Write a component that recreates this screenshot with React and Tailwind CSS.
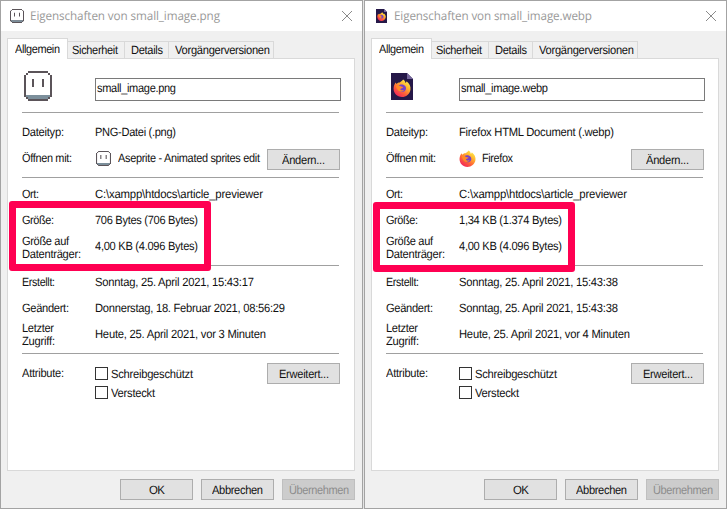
import { useLayoutEffect, useRef, useState } from "react";

function T({ w, children, className = "" }) {
  const ref = useRef(null);
  const [fit, setFit] = useState({ scale: 1, spacing: 0 });
  useLayoutEffect(() => {
    const el = ref.current;
    el.style.letterSpacing = "0px";
    el.style.transform = "none";
    const natural = el.getBoundingClientRect().width;
    const scale = Math.min(1, Math.pow(w / natural, 0.6));
    const spacing = (w / scale - natural) / (children.length - 1);
    el.style.letterSpacing = `${spacing}px`;
    el.style.transform = `scaleX(${scale})`;
    setFit({ scale, spacing });
  }, [w, children]);
  return (
    <span className={"block h-[14px] shrink-0 whitespace-nowrap leading-[14px] [text-rendering:geometricPrecision] " + className} style={{ width: w }}>
      <span ref={ref} className="inline-block origin-left" style={{ letterSpacing: fit.spacing, transform: `scaleX(${fit.scale})` }}>
        {children}
      </span>
    </span>
  );
}

function Sprite({ size, thin }) {
  return (
    <svg width={size} height={size} viewBox="0 0 28 30" preserveAspectRatio="none" shapeRendering={thin ? "auto" : "crispEdges"} className="block shrink-0">
      <path d="M4 0H24V2H26V4H28V26H26V28H24V30H4V28H2V26H0V4H2V2H4Z" fill="#5b5459" />
      <path d="M4 2H24V4H26V24H2V4H4Z" fill="#fff" />
      <path d="M2 24H26V26H24V28H4V26H2Z" fill="#7c8f9b" />
      <path d="M8 8h2v8h-2zM18 8h2v8h-2z" fill="#5b5459" />
    </svg>
  );
}

function Fox({ className }) {
  return (
    <svg viewBox="0 0 32 32" className={className}>
      <defs>
        <linearGradient id="flame" x1="0.85" y1="0.05" x2="0.2" y2="0.95">
          <stop offset="0" stopColor="#fff04a" />
          <stop offset="0.35" stopColor="#ffb02e" />
          <stop offset="0.65" stopColor="#ff6238" />
          <stop offset="1" stopColor="#f0245c" />
        </linearGradient>
      </defs>
      <path d="M18 1c3 2 4 4 4 6 2-1 2-2 2-3 5 4 8 9 7 15-1 8-8 13-15 13C7 32 1 25 1 17c0-5 2-9 4-11l1 3c1-1 2-2 4-3l2 0c2-1 5-3 6-5z" fill="url(#flame)" />
      <path d="M10 12c3-3 9-3 12 1 3 5 0 10-6 10-5 0-8-4-8-8l4 1 3-2c-2 0-3-2-5-2z" fill="#7542c9" />
      <path d="M5 12c3-2 6-1 8 1l5 1c0 2-4 2-5 4 1 3 5 2 7 1-2 4-8 5-11 1-2-2-3-5-4-8z" fill="#ff8a25" />
    </svg>
  );
}

function FoxFile({ className, fox }) {
  return (
    <span className={"relative block shrink-0 " + className}>
      <svg viewBox="0 0 22 27" preserveAspectRatio="none" className="block h-full w-full">
        <path d="M0 0H16L22 6V27H0Z" fill="#251848" />
        <path d="M16 0L22 6H16Z" fill="#75669b" />
      </svg>
      <Fox className={"absolute " + fox} />
    </span>
  );
}

function Button({ children, w, disabled }) {
  return (
    <div className={"flex h-[21px] w-[73px] shrink-0 items-center justify-center border pt-px " + (disabled ? "border-[#bfbfbf] bg-[#cccccc] text-[#8d8d8d]" : "border-[#adadad] bg-[#e1e1e1]")}>
      <T w={w}>{children}</T>
    </div>
  );
}

function Row({ label, lw, h, children }) {
  return (
    <div className={"flex items-center " + h}>
      <div className="w-[73px] shrink-0">
        <T w={lw}>{label}</T>
      </div>
      {children}
    </div>
  );
}

function TwoLine({ a, aw, b, bw, children }) {
  return (
    <div className="flex h-[26px] items-center">
      <div className="flex w-[73px] shrink-0 flex-col">
        <T w={aw} className="-mb-px">{a}</T>
        <T w={bw}>{b}</T>
      </div>
      {children}
    </div>
  );
}

function Line() {
  return <div className="h-px w-[317px] bg-[#a0a0a0]" />;
}

function Check({ label, w }) {
  return (
    <div className="flex h-[13px] items-center">
      <div className="mr-[3px] h-[13px] w-[13px] border border-[#333333] bg-white" />
      <T w={w}>{label}</T>
    </div>
  );
}

function Tab({ children, w, className }) {
  return (
    <div className={"flex h-[17px] items-center border-t border-r border-[#d9d9d9] bg-[#f0f0f0] " + className}>
      <T w={w}>{children}</T>
    </div>
  );
}

function Dialog({ d }) {
  return (
    <div className="flex h-[509px] w-[363px] flex-col border border-[#a3a3a3] bg-[#f0f0f0]">
      <div className="flex h-[30px] shrink-0 items-center bg-white pl-[9px]">
        <div className="flex w-5 items-center">
          {d.fox ? <FoxFile className="ml-[2px] h-[14px] w-[11px]" fox="left-px top-[3px] h-[9px] w-[9px]" /> : <Sprite size={14} thin />}
        </div>
        <T w={d.titleW} className="font-['Open_Sans',sans-serif] text-[#999999]">{d.title}</T>
        <svg className="mr-[9px] ml-auto" width="12" height="12" viewBox="0 0 12 12">
          <path d="M1 1L11 11M11 1L1 11" stroke="#8a8a8a" strokeWidth="1" />
        </svg>
      </div>
      <div className="mt-[7px] ml-[6px] flex h-5 shrink-0 items-end">
        <div className="relative z-10 -mb-px flex h-[21px] w-[61px] items-center border border-b-0 border-[#d9d9d9] bg-white pl-[7px]">
          <T w={45}>Allgemein</T>
        </div>
        <Tab w={46} className="w-[57px] pl-1">Sicherheit</Tab>
        <Tab w={32} className="w-[44px] pl-[6px]">Details</Tab>
        <Tab w={95} className="w-[105px] pl-[6px]">Vorgängerversionen</Tab>
      </div>
      <div className="ml-[6px] flex h-[413px] w-[348px] shrink-0 flex-col border border-[#d9d9d9] bg-white pl-[14px]">
        <div className="mt-3 flex h-[41px]">
          <div className="w-[73px] shrink-0">
            {d.fox ? <FoxFile className="mt-[2px] ml-[5px] h-[27px] w-[22px]" fox="left-[2px] top-[6px] h-[18px] w-[18px]" /> : <div className="ml-[2px] h-[30px] w-[28px]"><Sprite size="100%" /></div>}
          </div>
          <div className="mt-[7px] flex h-[23px] w-[246px] items-center border border-[#7a7a7a] bg-white pb-[3px] pl-px">
            <T w={d.nameW}>{d.name}</T>
          </div>
        </div>
        <Line />
        <Row label="Dateityp:" lw={42} h="mt-[9px] h-[20px]">
          <T w={d.typeW}>{d.type}</T>
        </Row>
        <Row label="Öffnen mit:" lw={50} h="mt-[6px] h-[20px]">
          <div className="mr-[6px] w-[17px] pl-px">
            {d.fox ? <Fox className="-ml-px h-[17px] w-[17px]" /> : <Sprite size={15} thin />}
          </div>
          <div className="w-[149px]">
            <T w={d.appW}>{d.app}</T>
          </div>
          <div className="mt-[3px]">
            <Button w={43}>Ändern...</Button>
          </div>
        </Row>
        <div className="mt-[9px]"><Line /></div>
        <Row label="Ort:" lw={17} h="mt-[6px] h-[20px]">
          <T w={168}>C:\xampp\htdocs\article_previewer</T>
        </Row>
        <Row label="Größe:" lw={32} h="mt-[6px] h-[20px]">
          <T w={103}>{d.size}</T>
        </Row>
        <div className="mt-[4px]">
          <TwoLine a="Größe auf" aw={47} b="Datenträger:" bw={59}>
            <T w={103} className="-mt-[2px]">4,00 KB (4.096 Bytes)</T>
          </TwoLine>
        </div>
        <div className="mt-[5px]"><Line /></div>
        <Row label="Erstellt:" lw={33} h="mt-[6px] h-[20px]">
          <T w={159}>{d.created}</T>
        </Row>
        <Row label="Geändert:" lw={47} h="mt-[6px] h-[20px]">
          <T w={d.modW}>{d.modified}</T>
        </Row>
        <div className="mt-[3px]">
          <TwoLine a="Letzter" aw={32} b="Zugriff:" bw={33}>
            <T w={171}>{d.access}</T>
          </TwoLine>
        </div>
        <div className="mt-[6px]"><Line /></div>
        <div className="mt-[9px] flex">
          <div className="w-[73px] pt-[3px]">
            <T w={42}>Attribute:</T>
          </div>
          <div className="flex w-[172px] flex-col gap-[6px] pt-1">
            <Check label="Schreibgeschützt" w={82} />
            <Check label="Versteckt" w={44} />
          </div>
          <Button w={50}>Erweitert...</Button>
        </div>
      </div>
      <div className="mt-2 flex gap-2 pl-[119px]">
        <Button w={16}>OK</Button>
        <Button w={51}>Abbrechen</Button>
        <Button w={60} disabled>Übernehmen</Button>
      </div>
    </div>
  );
}

const dialogs = [
  {
    fox: false,
    title: "Eigenschaften von small_image.png", titleW: 190,
    name: "small_image.png", nameW: 79,
    type: "PNG-Datei (.png)", typeW: 81,
    app: "Aseprite - Animated sprites edit", appW: 142,
    size: "706 Bytes (706 Bytes)",
    created: "Sonntag, 25. April 2021, 15:43:17",
    modified: "Donnerstag, 18. Februar 2021, 08:56:29", modW: 190,
    access: "Heute, 25. April 2021, vor 3 Minuten",
  },
  {
    fox: true,
    title: "Eigenschaften von small_image.webp", titleW: 198,
    name: "small_image.webp", nameW: 87,
    type: "Firefox HTML Document (.webp)", typeW: 155,
    app: "Firefox", appW: 31,
    size: "1,34 KB (1.374 Bytes)",
    created: "Sonntag, 25. April 2021, 15:43:38",
    modified: "Sonntag, 25. April 2021, 15:43:38", modW: 159,
    access: "Heute, 25. April 2021, vor 4 Minuten",
  },
];

export default function App() {
  return (
    <div className="relative flex h-[509px] w-[727px] gap-px overflow-hidden bg-[#e4e4e4] font-['Liberation_Sans',Arial,sans-serif] text-[12px] text-[#111111]">
      {dialogs.map((d) => (
        <Dialog key={d.name} d={d} />
      ))}
      <div className="absolute top-[201px] left-[9px] z-20 h-[70px] w-[202px] rounded-[3px] border-[7px] border-[#ff0052]" />
      <div className="absolute top-[202px] left-[373px] z-20 h-[70px] w-[202px] rounded-[3px] border-[7px] border-[#ff0052]" />
    </div>
  );
}
